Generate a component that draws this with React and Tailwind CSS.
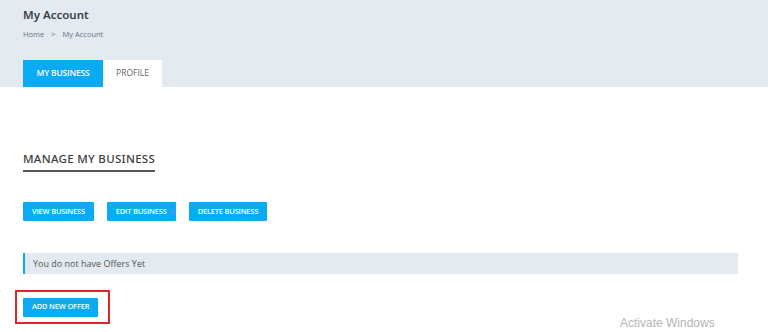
import React from "react";

const font = { fontFamily: '"Open Sans", "Liberation Sans", sans-serif' };

const ActionButton = ({ label }) => (
	<button
		type="button"
		className="h-[19px] px-[9px] bg-[#0aaaf5] text-white text-[7.5px] font-semibold tracking-[-0.2px] rounded-[1px] leading-none"
	>
		{label}
	</button>
);

const App = () => {
	return (
		<div className="relative w-[768px] h-[332px] overflow-hidden bg-white" style={font}>
			<header className="h-[87px] bg-[#e3eaf2] px-[23px] flex flex-col">
				<h1 className="pt-[8px] text-[11.5px] font-semibold text-[#3a3f47] leading-[14px]" style={{ fontFamily: '"Noto Sans", sans-serif' }}>
					My Account
				</h1>
				<div className="mt-[7px] flex items-center gap-[7px] text-[7.5px] text-[#6b7280] leading-[10px]">
					<span>Home</span>
					<span>&gt;</span>
					<span>My Account</span>
				</div>
				<div className="mt-auto flex">
					<button type="button" className="w-[80px] h-[27px] bg-[#0aaaf5] text-white text-[8.5px] font-semibold tracking-[-0.2px]">
						MY BUSINESS
					</button>
					<button type="button" className="w-[59px] h-[27px] bg-white text-[#666] text-[8.5px]">
						PROFILE
					</button>
				</div>
			</header>

			<main className="px-[23px] pt-[58px]">
				<div className="inline-block">
					<h2 className="text-[11.5px] font-medium text-[#3d3d3d] tracking-[0.3px] leading-[14px]" style={{ fontFamily: '"Noto Sans", sans-serif' }}>
						MANAGE MY BUSINESS
					</h2>
					<div className="mt-[4px] h-[2px] w-[132px] bg-[#555]" />
				</div>

				<div className="mt-[30px] flex gap-[13px]">
					<ActionButton label="VIEW BUSINESS" />
					<ActionButton label="EDIT BUSINESS" />
					<ActionButton label="DELETE BUSINESS" />
				</div>

				<div className="mt-[32px] w-[715px] h-[21px] bg-[#e3eaf2] border-l-2 border-[#0aaaf5] flex items-center pl-[8px] text-[9px] text-[#555]">
					You do not have Offers Yet
				</div>

				<div className="mt-[16px] -ml-[8px] w-[95px] h-[34px] border-2 border-[#d92a2a] flex items-center pl-[6px]">
					<ActionButton label="ADD NEW OFFER" />
				</div>
			</main>

			<div
				className="absolute left-[620px] top-[316px] text-[12px] leading-[14px] text-[#b5b5b5]"
				style={{ fontFamily: '"Liberation Sans", sans-serif' }}
			>
				Activate Windows
			</div>
		</div>
	);
};

export default App;
